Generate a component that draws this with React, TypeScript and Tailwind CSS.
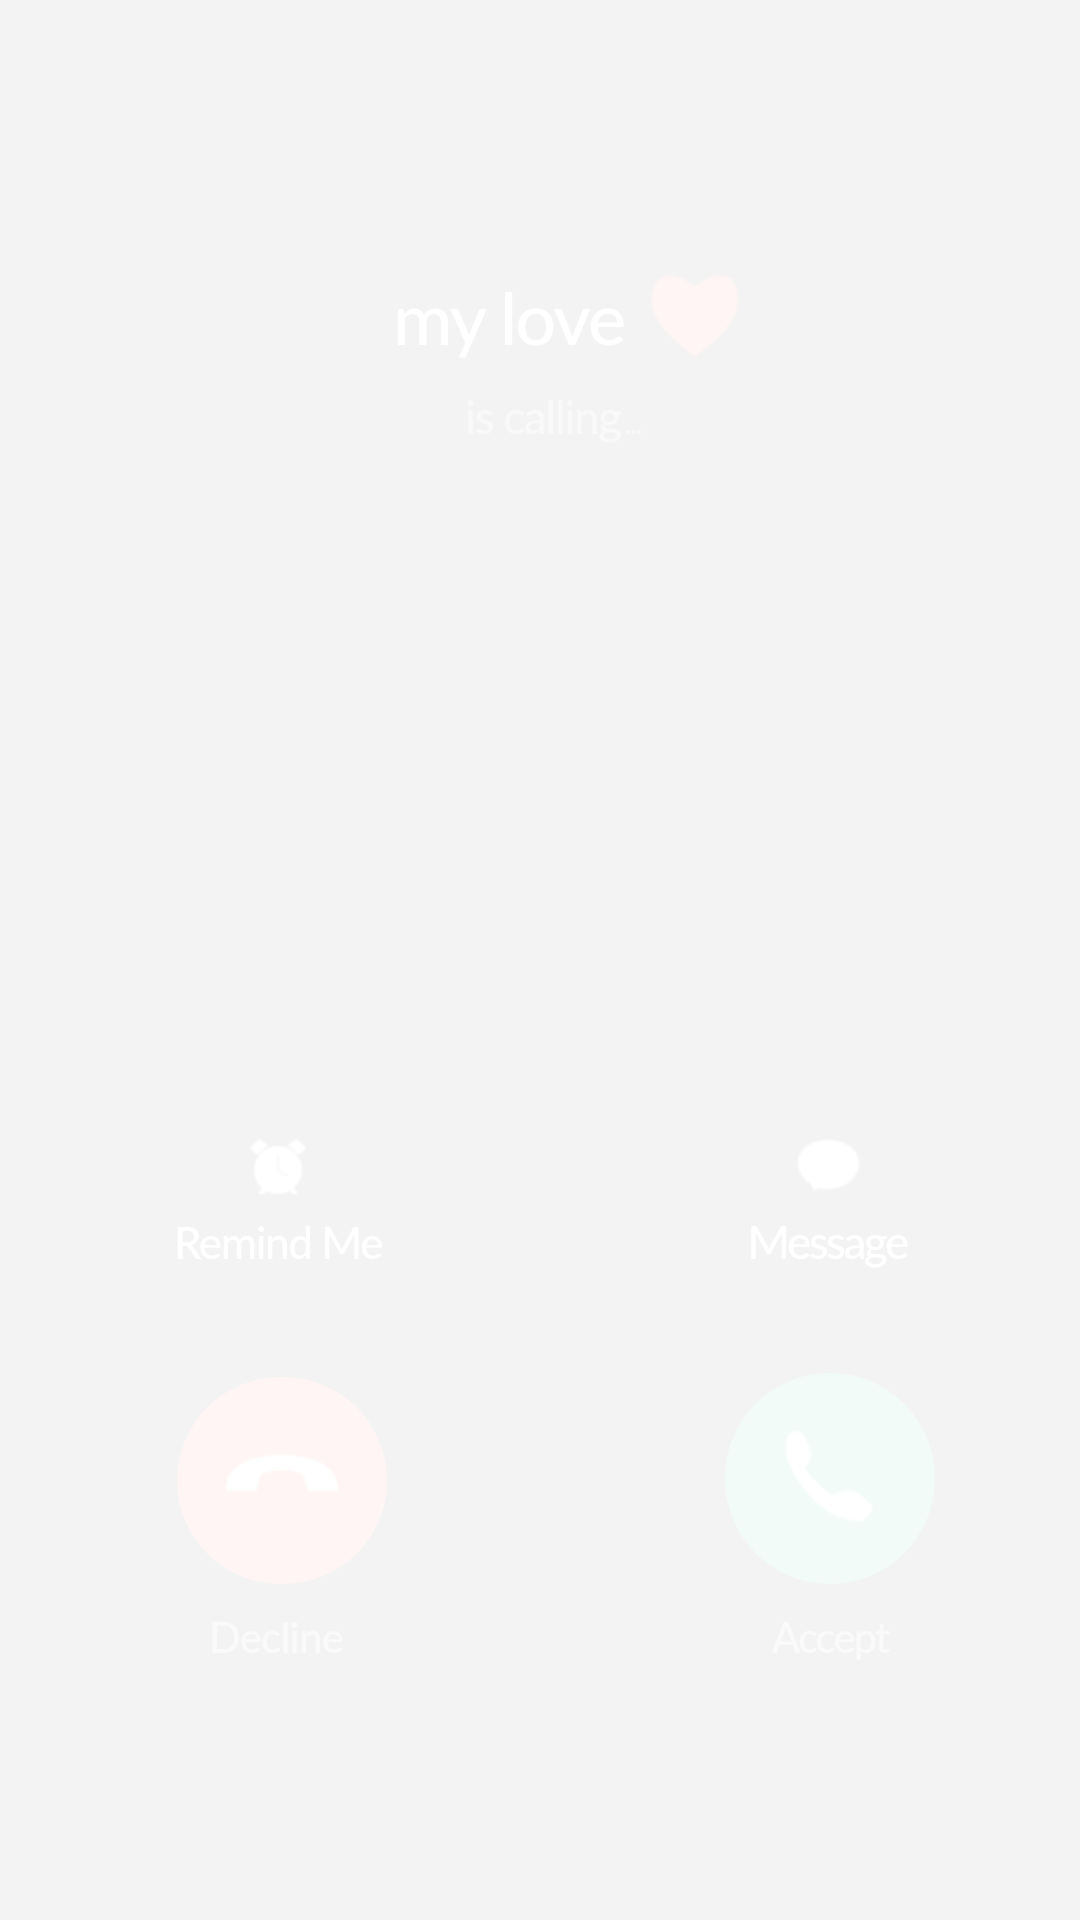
export default function App() {
  const font = { fontFamily: '"Lato", "Open Sans", sans-serif' };
  return (
    <div className="w-[1080px] h-[1920px] bg-[#f3f3f3] overflow-hidden flex flex-col" style={font}>
      <div className="pt-[267px] pl-[393px] flex flex-col items-start h-[450px]">
        <div className="flex items-start">
          <span className="text-[72px] leading-[100px] font-medium text-white tracking-[-1.8px] whitespace-nowrap blur-[0.7px]">my love</span>
          <svg className="ml-[26px] mt-[7px] blur-[1.5px]" width="90" height="84" viewBox="0 0 90 84">
            <path d="M45 83C36 75 4 54 2 30C1 14 6 3 18 2C30 1 38 8 45 12C52 8 60 1 72 2C84 3 89 14 88 30C86 54 54 75 45 83Z" fill="#fff5f4" />
          </svg>
        </div>
        <div className="ml-[72px] mt-[20px] text-[46px] leading-[60px] font-medium text-[#f9f9f9] tracking-[-1.5px] whitespace-nowrap blur-[0.7px]">
          is calling<span className="ml-[4px] text-[28px] tracking-[-1px]">...</span>
        </div>
      </div>

      <div className="mt-[688px] pl-[177px] pr-[145px] flex justify-between">
        <div className="w-[210px] flex flex-col items-center">
          <svg className="-ml-[8px] blur-[0.8px]" width="60" height="60" viewBox="0 0 60 60" fill="#fff">
            <circle cx="30" cy="32" r="24" />
            <path d="M2 10L11 1L20 7L9 17Z" />
            <path d="M58 10L49 1L40 7L51 17Z" />
            <path d="M14 50L10 56H15L19 53Z" />
            <path d="M46 50L50 56H45L41 53Z" />
            <path d="M30 16V33L40 38" fill="none" stroke="#f8f8f8" strokeWidth="2" />
          </svg>
          <div className="-ml-[8px] mt-[15px] text-[44px] leading-[58px] font-medium tracking-[-1.4px] text-white whitespace-nowrap blur-[0.7px]">Remind Me</div>
        </div>
        <div className="w-[210px] flex flex-col items-center">
          <svg className="-ml-[4px] blur-[0.8px]" width="64" height="60" viewBox="0 0 64 60" fill="#fff">
            <path d="M32 2C49 2 63 11 63 25C63 40 49 51 32 51C29 51 26 51 23 50L18 53L15 46C7 41 2 34 2 25C2 11 15 2 32 2Z" />
          </svg>
          <div className="-ml-[6px] mt-[15px] text-[46px] leading-[58px] font-medium tracking-[-2.6px] text-white whitespace-nowrap blur-[0.7px]">Message</div>
        </div>
      </div>

      <div className="mt-[102px] pl-[177px] pr-[145px] flex justify-between items-end">
        <div className="w-[210px] flex flex-col items-center">
          <div className="w-[210px] h-[207px] rounded-full bg-[#fff5f4] flex items-center justify-center">
            <svg className="blur-[0.8px] -mt-[16px]" width="116" height="40" viewBox="0 0 116 40" fill="#fff">
              <path d="M2 38C0 18 20 2 58 2C96 2 116 18 114 38H84C80 30 82 22 76 20C64 16 52 16 40 20C34 22 36 30 32 38Z" />
            </svg>
          </div>
          <div className="-ml-[12px] mt-[24px] text-[42px] leading-[58px] font-medium tracking-[-0.8px] text-[#fafafa] whitespace-nowrap blur-[0.7px]">Decline</div>
        </div>
        <div className="w-[210px] flex flex-col items-center">
          <div className="w-[210px] h-[211px] rounded-full bg-[#f2fbf7] flex items-center justify-center">
            <svg className="blur-[1px] -mt-[6px] -ml-[2px]" width="92" height="94" viewBox="0 0 92 94" fill="#fff">
              <path d="M3 10C6 2 16 0 20 5L28 22C30 28 27 34 22 38C28 50 40 60 50 66C58 61 66 60 74 63L89 76C91 81 84 90 78 92C60 92 42 84 26 66C10 48 0 26 3 10Z" />
            </svg>
          </div>
          <div className="mt-[24px] text-[42px] leading-[58px] font-medium tracking-[-2px] text-[#fafafa] whitespace-nowrap blur-[0.7px]">Accept</div>
        </div>
      </div>
    </div>
  );
}
